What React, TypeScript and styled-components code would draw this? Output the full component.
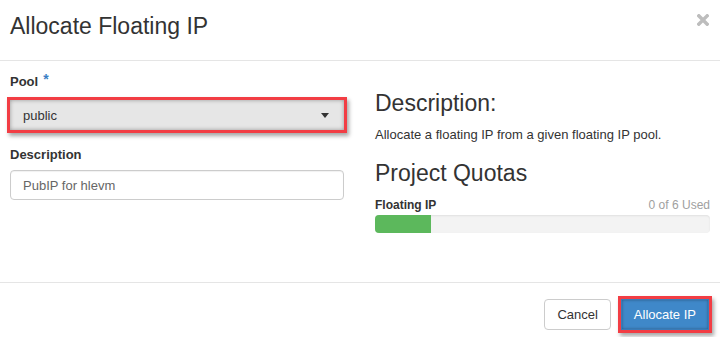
import React from 'react'
import styled, { createGlobalStyle } from 'styled-components'

const quota = { label: 'Floating IP', used: 0, limit: 6 };

export default function App() {
  // the bar shows what would be used after this allocation
  const pct = ((quota.used + 1) / quota.limit) * 100;

  return (
    <>
      <GlobalStyle />
      <Dialog>
        <Header>
          <Title>Allocate Floating IP</Title>
          <CloseButton aria-label='Close'>
            <svg width='12' height='12' viewBox='0 0 12 12'>
              <path d='M1.8 1.8 L10.2 10.2 M10.2 1.8 L1.8 10.2' stroke='#bdbdbd' strokeWidth='3.4' strokeLinecap='square' />
            </svg>
          </CloseButton>
        </Header>

        <Body>
          <Column>
            <Label>Pool<Required>*</Required></Label>
            <Highlight>
              <Select>
                <span>public</span>
                <Caret />
              </Select>
            </Highlight>
            <Label $spaced>Description</Label>
            <TextInput readOnly defaultValue='PubIP for hlevm' />
          </Column>

          <InfoColumn>
            <Heading>Description:</Heading>
            <Help>Allocate a floating IP from a given floating IP pool.</Help>
            <Heading $spaced>Project Quotas</Heading>
            <QuotaRow>
              <strong>{ quota.label }</strong>
              <span>{ quota.used } of { quota.limit } Used</span>
            </QuotaRow>
            <Progress>
              <ProgressFill style={{ width: `${pct}%` }} />
            </Progress>
          </InfoColumn>
        </Body>

        <Footer>
          <Button>Cancel</Button>
          <Highlight>
            <Button $primary>Allocate IP</Button>
          </Highlight>
        </Footer>
      </Dialog>
    </>
  )
}

// styled components
const GlobalStyle = createGlobalStyle`
  * {box-sizing: border-box;}
  body {
    margin: 0;
    background: #ffffff;
    font-family: "Liberation Sans", Arial, sans-serif;
    color: #333333;
  }
`;

const Dialog = styled.div`
  display: flex;
  flex-direction: column;
  width: 720px;
  height: 337px;
  background: #ffffff;
`;

const Header = styled.div`
  display: flex;
  justify-content: space-between;
  align-items: flex-start;
  height: 61px;
  padding: 14px 11px 0px 10px;
  border-bottom: 1px solid #e5e5e5;
`;

const Title = styled.h4`
  margin: 0px;
  font-size: 23px;
  font-weight: 400;
  line-height: 1.1;
  color: #333333;
`;

const CloseButton = styled.button`
  display: flex;
  padding: 0px;
  border: none;
  background: none;
`;

const Body = styled.div`
  display: grid;
  grid-template-columns: 334px 335px;
  column-gap: 31px;
  height: 221px;
  padding: 12px 10px 0px;
`;

const Column = styled.div`
  display: flex;
  flex-direction: column;
  align-items: stretch;
`;

const InfoColumn = styled(Column)`
  padding-top: 18px;
`;

const Label = styled.label<{ $spaced?: boolean }>`
  display: block;
  margin: ${({ $spaced }) => $spaced ? '13px 0px 6px' : '0px 0px 6px'};
  font-size: 13px;
  font-weight: 700;
  line-height: 18px;
`;

const Required = styled.span`
  margin-left: 5px;
  font-size: 14px;
  line-height: 12px;
  vertical-align: top;
  color: #3a7fc4;
`;

const Highlight = styled.div`
  display: flex;
  margin: 0px -3px;
  border: 3px solid #f23d44;
  box-shadow: 2px 3px 4px rgba(0, 0, 0, 0.35);
`;

const Select = styled.div`
  display: flex;
  flex: 1;
  justify-content: space-between;
  align-items: center;
  height: 30px;
  padding: 0px 15px 0px 13px;
  font-size: 13px;
  color: #333333;
  background: #e6e6e6;
  box-shadow: inset 0px 0px 4px rgba(0, 0, 0, 0.35);
`;

const Caret = styled.span`
  width: 0px;
  height: 0px;
  border-top: 5px solid #333333;
  border-left: 4px solid transparent;
  border-right: 4px solid transparent;
`;

const TextInput = styled.input`
  display: block;
  width: 100%;
  height: 30px;
  padding: 0px 12px;
  font-family: inherit;
  font-size: 13px;
  color: #666666;
  border: 1px solid #cccccc;
  border-radius: 4px;
  outline: none;
  box-shadow: inset 0px 1px 1px rgba(0, 0, 0, 0.06);
`;

const Heading = styled.h3<{ $spaced?: boolean }>`
  margin: ${({ $spaced }) => $spaced ? '17px 0px 0px' : '0px'};
  font-size: 23px;
  font-weight: 400;
  line-height: 1.1;
  color: #333333;
`;

const Help = styled.p`
  margin: 10px 0px 0px;
  font-size: 13px;
  line-height: 18px;
`;

const QuotaRow = styled.div`
  display: flex;
  justify-content: space-between;
  margin-top: 10px;
  font-size: 12px;
  line-height: 16px;

  & > span {color: #a0a0a0;}
`;

const Progress = styled.div`
  display: flex;
  height: 18px;
  margin-top: 2px;
  border-radius: 4px;
  overflow: hidden;
  background: #f3f3f3;
  box-shadow: inset 0px 1px 2px rgba(0, 0, 0, 0.08);
`;

const ProgressFill = styled.div`
  height: 100%;
  background: #5cb85c;
`;

const Footer = styled.div`
  display: flex;
  justify-content: flex-end;
  align-items: center;
  gap: 7px;
  padding: 13px 11px 0px;
  border-top: 1px solid #e5e5e5;

  & > ${Highlight} {margin: 0px -3px 0px 0px;}
`;

const Button = styled.button<{ $primary?: boolean }>`
  height: 31px;
  padding: 0px 12px;
  font-family: inherit;
  font-size: 13px;
  border-radius: ${({ $primary }) => $primary ? '0px' : '4px'};
  border: 1px solid ${({ $primary }) => $primary ? '#3a7bb8' : '#cccccc'};
  color: ${({ $primary }) => $primary ? '#ffffff' : '#333333'};
  background: ${({ $primary }) => $primary ? '#3f88c9' : '#ffffff'};
  box-shadow: ${({ $primary }) => $primary ? 'inset 0px 0px 3px rgba(0, 0, 0, 0.35)' : 'none'};
`;
